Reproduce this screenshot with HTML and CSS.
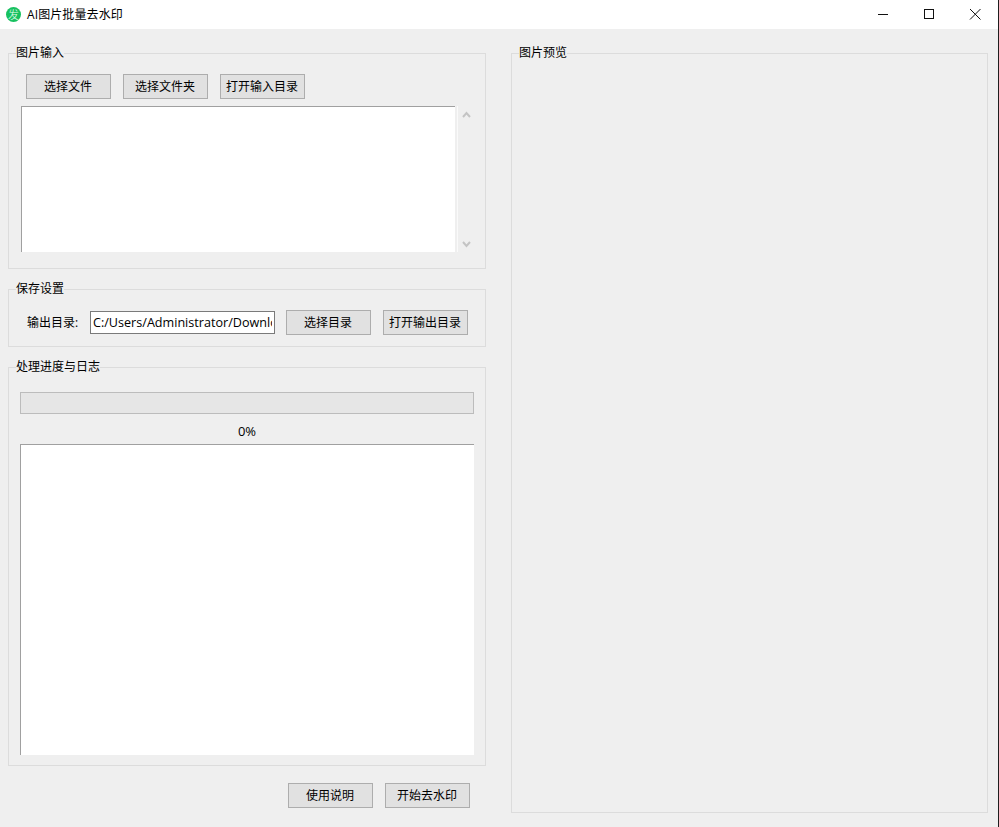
FILE: index.html
```html
<!DOCTYPE html>
<html lang="zh-CN">
<head>
<meta charset="utf-8">
<title>AI图片批量去水印</title>
<link rel="stylesheet" href="styles.css">
</head>
<body>
<div class="window">
  <header class="titlebar">
    <div class="app-icon">发</div>
    <div class="app-title">AI图片批量去水印</div>
    <div class="win-controls">
      <svg class="ctl" width="46" height="28" viewBox="0 0 46 28"><path d="M18 13.5H28" stroke="#111" fill="none"/></svg>
      <svg class="ctl" width="46" height="28" viewBox="0 0 46 28"><rect x="18.5" y="8.5" width="9" height="9" stroke="#111" fill="none"/></svg>
      <svg class="ctl" width="46" height="28" viewBox="0 0 46 28"><path d="M18 8L28.5 18.5M28.5 8L18 18.5" stroke="#111" fill="none"/></svg>
    </div>
  </header>
  <main class="content">
    <div class="left">
      <section class="group group-input">
        <div class="group-title">图片输入</div>
        <div class="row row-files">
          <button class="btn">选择文件</button>
          <button class="btn">选择文件夹</button>
          <button class="btn">打开输入目录</button>
        </div>
        <div class="list-wrap">
          <div class="list"></div>
          <div class="scroll">
            <svg width="9" height="7" viewBox="0 0 9 7"><path d="M1 6L4.5 2L8 6" stroke="#c4c4c4" stroke-width="2" fill="none"/></svg>
            <svg width="9" height="7" viewBox="0 0 9 7"><path d="M1 1L4.5 5L8 1" stroke="#c4c4c4" stroke-width="2" fill="none"/></svg>
          </div>
        </div>
      </section>
      <section class="group group-save">
        <div class="group-title">保存设置</div>
        <div class="row row-save">
          <label class="out-label">输出目录:</label>
          <input class="path" type="text" value="C:/Users/Administrator/Downloads" readonly>
          <button class="btn">选择目录</button>
          <button class="btn">打开输出目录</button>
        </div>
      </section>
      <section class="group group-log">
        <div class="group-title">处理进度与日志</div>
        <div class="progress"></div>
        <div class="percent">0%</div>
        <div class="log"></div>
      </section>
      <div class="actions">
        <button class="btn">使用说明</button>
        <button class="btn">开始去水印</button>
      </div>
    </div>
    <section class="group group-preview">
      <div class="group-title">图片预览</div>
    </section>
  </main>
</div>
</body>
</html>
```
FILE: styles.css
```css
* { box-sizing: border-box; }
html, body { margin: 0; padding: 0; }
body {
  width: 999px;
  height: 827px;
  overflow: hidden;
  background: #efefef;
  color: #000;
  font: 12px/16px "Open Sans", "Noto Sans CJK SC", sans-serif;
}
.window {
  display: flex;
  flex-direction: column;
  height: 827px;
  border-right: 1px solid #1e1e1e;
}

.titlebar {
  height: 29px;
  flex: none;
  background: #fff;
  display: flex;
  align-items: center;
  padding-left: 6px;
}
.app-icon {
  width: 15px;
  height: 15px;
  border-radius: 50%;
  background: #17c160;
  color: #e8fff0;
  font: 300 11px/15px "Noto Sans CJK SC", sans-serif;
  text-align: center;
  margin-right: 6px;
}
.app-title { font-size: 12px; letter-spacing: 0.1px; }
.win-controls { margin-left: auto; display: flex; }
.ctl { display: block; }

.content {
  flex: 1;
  display: flex;
  gap: 25px;
  padding: 24px 10px 14px 8px;
  align-items: stretch;
}
.left { width: 478px; display: flex; flex-direction: column; }

.group {
  border: 1px solid #dcdcdc;
  display: flex;
  flex-direction: column;
}
.group-title {
  align-self: flex-start;
  background: #efefef;
  margin: -9px 0 1px 7px;
  height: 16px;
  line-height: 15px;
}
.row { display: flex; align-items: center; }

.btn {
  width: 85px;
  height: 25px;
  flex: none;
  padding: 0 1px 0 0;
  border: 1px solid #adadad;
  background: #e1e1e1;
  color: #000;
  font: inherit;
}

.group-input { height: 216px; }
.row-files { gap: 12px; margin: 12px 0 0 17px; }
.list-wrap { display: flex; margin: 7px 0 0 12px; }
.list {
  width: 434px;
  height: 146px;
  background: #fff;
  border-top: 1px solid #a0a0a0;
  border-left: 1px solid #a0a0a0;
  box-shadow: 2px 0 0 #efefef, 3px 0 0 #fafafa;
}
.scroll {
  height: 146px;
  margin-left: 7px;
  display: flex;
  flex-direction: column;
  justify-content: space-between;
  padding: 5px 0 4px;
}
.scroll svg { display: block; }

.group-save { height: 58px; margin-top: 20px; }
.row-save { margin: 12px 0 0 18px; }
.out-label { width: 63px; flex: none; }
.path {
  width: 185px;
  height: 23px;
  flex: none;
  margin-right: 11px;
  padding: 0 2px;
  border: 1px solid #7a7a7a;
  border-radius: 0;
  background: #fff;
  color: #000;
  font: inherit;
  font-size: 12.6px;
  outline: none;
}
.row-save .btn + .btn { margin-left: 12px; }

.group-log { height: 399px; margin-top: 20px; }
.progress {
  height: 22px;
  margin: 16px 11px 0;
  background: #e6e6e6;
  border: 1px solid #bcbcbc;
}
.percent { text-align: center; font-size: 13px; margin-top: 9px; height: 21px; line-height: 16px; }
.log {
  height: 311px;
  margin: 0 11px;
  background: #fff;
  border-top: 1px solid #a0a0a0;
  border-left: 1px solid #a0a0a0;
}

.actions {
  display: flex;
  justify-content: flex-end;
  gap: 12px;
  margin-top: 17px;
  padding-right: 16px;
}

.group-preview { width: 477px; height: 760px; }
```
